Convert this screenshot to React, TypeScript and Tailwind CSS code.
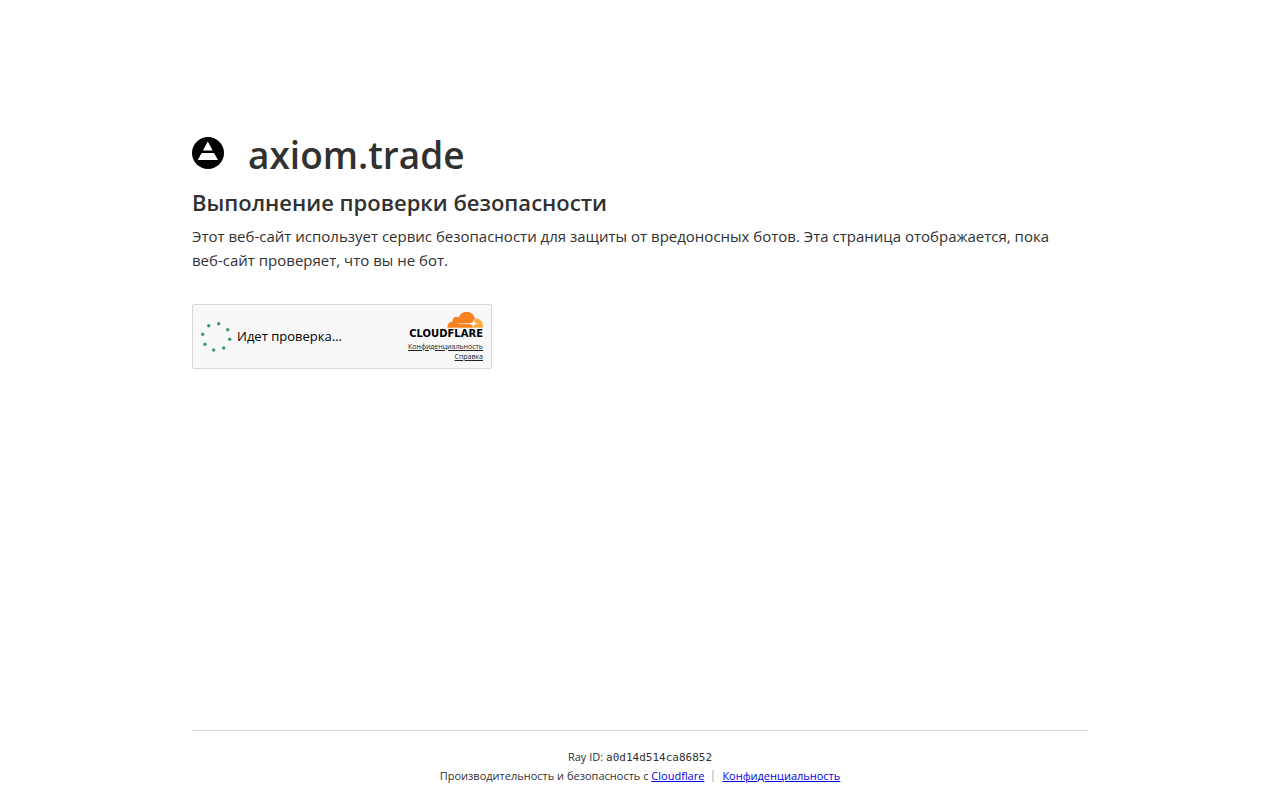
const dots = [
  { x: 17.7, y: 2.7 },
  { x: 26.7, y: 8.7 },
  { x: 28.7, y: 18.3 },
  { x: 22.7, y: 27 },
  { x: 12.7, y: 29 },
  { x: 4, y: 23.3 },
  { x: 1.7, y: 13.3 },
  { x: 7.7, y: 4.7 },
];

function SiteIcon() {
  return (
    <svg viewBox="0 0 32 32" className="mb-1 size-8" aria-hidden="true">
      <circle cx="16" cy="16" r="16" fill="#000" />
      <path d="M15.8 4.6 20.7 13.6H10.9Z" fill="#fff" />
      <path d="M9.6 16H22L26 23H5.8Z" fill="#fff" />
    </svg>
  );
}

function Spinner() {
  return (
    <svg viewBox="0 0 31 31" className="size-[31px]" aria-hidden="true">
      {dots.map((dot) => (
        <circle key={`${dot.x}-${dot.y}`} cx={dot.x} cy={dot.y} r="1.7" fill="#3d9970" />
      ))}
    </svg>
  );
}

function CloudflareLogo() {
  return (
    <svg viewBox="0 0 76 26" className="h-[26px] w-[76px]" role="img" aria-label="Cloudflare">
      <g transform="translate(40.5 -10) scale(1.48)">
        <path
          fill="#f6821f"
          d="M16.5088 16.8447c.1475-.5068.0908-.9707-.1553-1.3154-.2246-.3164-.6045-.499-1.0615-.5205l-8.6592-.1123a.1559.1559 0 0 1-.1333-.0713c-.0283-.042-.0351-.0986-.021-.1553.0278-.084.1123-.1484.2036-.1562l8.7359-.1123c1.0351-.0489 2.1601-.8868 2.5537-1.9136l.499-1.3013c.0215-.0561.0293-.1128.0147-.168-.5625-2.5463-2.835-4.4453-5.5499-4.4453-2.5039 0-4.6284 1.6177-5.3876 3.8614-.4927-.3658-1.1187-.5625-1.794-.499-1.2026.119-2.1665 1.083-2.2861 2.2856-.0283.31-.0069.6128.0635.894C1.5683 13.171 0 14.7754 0 16.752c0 .1748.0142.3515.0352.5273.0141.083.0844.1475.1689.1475h15.9814c.0909 0 .1758-.0645.2032-.1553l.12-.4268z"
        />
        <path
          fill="#fbad41"
          d="M18.8 11.2c2.9-.2 5.2 2.2 5.2 4.8 0 .5-.1.9-.2 1.3 0 .1-.1.1-.2.1H16.3z"
        />
        <path fill="#fff" d="M17.6 12l.6 1.9 2.1.6-2.1.6-.6 1.9-.6-1.9-2.1-.6 2.1-.6z" />
      </g>
      <text
        x="76"
        y="25"
        textAnchor="end"
        fontSize="10"
        fontWeight="700"
        fontFamily="DejaVu Sans, sans-serif"
        fill="#000"
      >
        CLOUDFLARE
      </text>
    </svg>
  );
}

function Turnstile() {
  return (
    <div className="flex h-[65px] w-[300px] items-center justify-between rounded-xs border border-[#d9d9d9] bg-[#f8f8f8] px-2 text-black">
      <div className="flex items-center gap-[5px]" role="status">
        <Spinner />
        <span className="text-[13px]">Идет проверка...</span>
      </div>
      <div className="flex flex-col items-end">
        <CloudflareLogo />
        <div className="mt-1 flex flex-col items-end text-[7px] leading-[10px] text-[#232323]">
          <a href="#privacy" className="underline">Конфиденциальность</a>
          <a href="#help" className="underline">Справка</a>
        </div>
      </div>
    </div>
  );
}

export default function App() {
  return (
    <div className="flex min-h-screen flex-col bg-white font-['Open_Sans','Noto_Sans',sans-serif] text-[#313131]">
      <main className="mx-auto w-full max-w-[960px] flex-1 px-8 pt-[126px]">
        <div className="flex items-center gap-6">
          <SiteIcon />
          <h1 className="text-[37px] leading-[58px] font-semibold">axiom.trade</h1>
        </div>
        <h2 className="text-[22px] leading-9 font-semibold">Выполнение проверки безопасности</h2>
        <p className="mt-1 mb-8 text-[15px] leading-6">
          Этот веб-сайт использует сервис безопасности для защиты от вредоносных ботов. Эта страница
          отображается, пока <span className="whitespace-nowrap">веб-сайт</span> проверяет, что вы не бот.
        </p>
        <Turnstile />
      </main>

      <footer className="mx-auto w-full max-w-[960px] px-8 text-[11px]">
        <div className="border-t border-[#d9d9d9] pt-4 pb-[15px] text-center">
          <div className="leading-[19px]">
            Ray ID: <code className="font-['DejaVu_Sans_Mono',monospace]">a0d14d514ca86852</code>
          </div>
          <div className="flex items-center justify-center leading-[18px]">
            <span>
              Производительность и безопасность с{" "}
              <a href="https://www.cloudflare.com" className="text-[#0000ee] underline">Cloudflare</a>
            </span>
            <span className="mx-2 h-3 border-l-2 border-[#d9d9d9]" />
            <a href="#privacy-policy" className="text-[#0000ee] underline">Конфиденциальность</a>
          </div>
        </div>
      </footer>
    </div>
  );
}
